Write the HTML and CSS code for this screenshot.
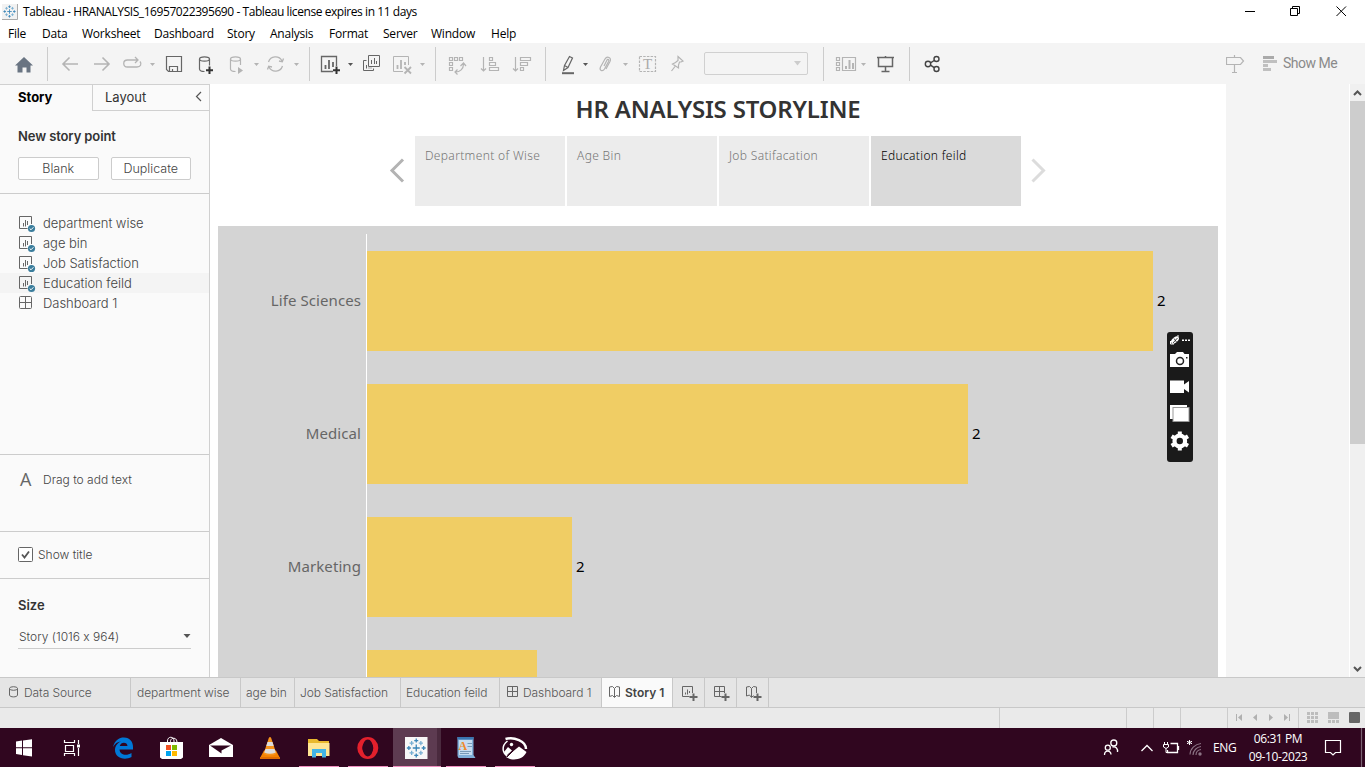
FILE: index.html
```html
<!DOCTYPE html>
<html lang="en">
<head>
<meta charset="utf-8">
<title>Tableau - HRANALYSIS_16957022395690</title>
<link rel="stylesheet" href="styles.css">
</head>
<body>
<svg class="defs" width="0" height="0">
  <defs>
    <symbol id="tableau" viewBox="-10 -10 20 20">
      <g stroke="#3b86b8" stroke-width="1.3" fill="none">
        <path d="M0-3.5V3.5M-3.5 0H3.5"/>
        <path d="M0-9.4V-5.4M-2-7.4H2M0 5.4V9.4M-2 7.4H2M-9.4 0H-5.4M-7.4-2V2M9.4 0H5.4M7.4-2V2"/>
        <path stroke="#77aed2" d="M-4.6-7V-2.8M-6.7-4.9H-2.5M4.6-7V-2.8M6.7-4.9H2.5M-4.6 7V2.8M-6.7 4.9H-2.5M4.6 7V2.8M6.7 4.9H2.5"/>
      </g>
    </symbol>
    <symbol id="sheet" viewBox="0 0 17 17">
      <path d="M8.5 12.5H.5V.5H12.500V8" fill="none" stroke="#666"/>
      <path d="M4.500 7V10.500M6.500 4V10.500M8.500 5V9" stroke="#666" fill="none"/>
      <circle cx="12.500" cy="12.500" r="3.600" fill="#3a7d9c"/>
      <path d="M10.700 12.500L12 13.800L14.400 11.300" stroke="#fff" fill="none"/>
    </symbol>
    <symbol id="grid" viewBox="0 0 13 13">
      <rect x=".5" y=".5" width="12" height="12" rx="1" fill="none" stroke="#666"/>
      <path d="M6.500 0V13M0 6.500H13" stroke="#666"/>
    </symbol>
  </defs>
</svg>
<div class="window">
  <header class="titlebar">
    <svg class="applogo" width="16" height="16"><rect width="16" height="16" fill="#f2f2f2"/><path d="M0 15.500H15.500V0" fill="none" stroke="#aaa"/><use href="#tableau" x="1" y="1" width="13" height="13"/></svg>
    <span class="apptitle">Tableau - HRANALYSIS_16957022395690 - Tableau license expires in 11 days</span>
    <svg class="winbtns" width="120" height="22" viewBox="1235 0 120 22" fill="none" stroke="#000">
      <path d="M1245 10.500H1255M1290.500 7.500H1297.500V14.500H1290.500ZM1292.500 7.500V5.500H1299.500V12.500H1297.500M1336.500 5.500L1346 15M1346 5.500L1336.500 15"/>
    </svg>
  </header>
  <nav class="menubar">
    <span class="m1">File</span><span class="m2">Data</span><span class="m3">Worksheet</span><span class="m4">Dashboard</span><span class="m5">Story</span><span class="m6">Analysis</span><span class="m7">Format</span><span class="m8">Server</span><span class="m9">Window</span><span>Help</span>
  </nav>
  <div class="toolbar">
    <svg width="48" height="41" viewBox="0 43 48 41">
      <path d="M24 57L33 65.500H30.500V72.500H26.500V67.500H22.500V72.500H17.500V65.500H15Z" fill="#697482"/>
      <path d="M47.500 47V81" stroke="#ccc"/>
    </svg>
    <svg width="262" height="41" viewBox="48 43 262 41" fill="none" stroke="#b4b4b4">
      <path stroke-width="1.600" d="M78 64H63M69.500 57.500L63 64L69.500 70.500M94 64H109M102.500 57.500L109 64L102.500 70.500"/>
      <path d="M134 67H127.500C122.500 67 122.500 60 127.500 60H138M135 57L138 60L135 63M134 67H137C140.500 67 142 64 140 61.500" stroke-width="1.300"/>
      <path d="M150 63H155L152.500 66ZM254 63H259L256.500 66ZM294 63H299L296.500 66Z" fill="#b4b4b4" stroke="none"/>
      <path stroke="#666" stroke-width="1.200" d="M166.500 56.500H181.500V71.500H168.500L166.500 69.500ZM169.500 71V66.500H177.500V71M172.500 71V69"/>
      <g stroke="#666" stroke-width="1.200"><ellipse cx="204.500" cy="59" rx="5" ry="2.200"/><path d="M199.500 59V69C199.500 70.500 202 71.500 204.500 71.500M209.500 59V65.500"/><path stroke="#333" stroke-width="2" d="M209.500 66.500V74M206 70.300H213"/></g>
      <g stroke-width="1.200"><ellipse cx="235.500" cy="59" rx="5" ry="2.200"/><path d="M230.500 59V69C230.500 70.500 233 71.500 235.500 71.500M240.500 59V65"/><path d="M238 67L243 70.500L238 74Z" fill="#b4b4b4" stroke="none"/></g>
      <path stroke-width="1.300" d="M268.500 62A7.300 7.300 0 0 1 282 61M282.500 66A7.300 7.300 0 0 1 269 67M283.500 58.500L282.300 61.800L279 61M267.500 69.500L268.700 66.200L272 67"/>
      <path d="M309.500 47V81" stroke="#ccc"/>
    </svg>
    <svg width="126" height="41" viewBox="310 43 126 41" fill="none" stroke="#666">
      <path stroke-width="1.300" d="M333 71.500H321.500V56.500H336.500V66"/><path stroke-width="1.800" d="M325.500 69V65M329 69V60M333 67V62"/><path stroke="#333" stroke-width="2" d="M336.500 66.500V74M333 70.300H340"/>
      <path d="M348 63H353L350.500 66Z" fill="#555" stroke="none"/>
      <path d="M368.500 55.500H379.500V66.500H368.500ZM371.500 64V60M374.500 64V58M376.500 64V61M366.500 60.500H363.500V70.500H373.500V68.500M366.500 68.500V65M369 68.500V67.500M371 68.500V67.500"/>
      <g stroke="#b4b4b4"><path d="M403 71.500H393.500V56.500H408.500V65"/><path stroke-width="1.800" d="M397.500 69V65M401 69V60M405 65V62M404.500 67L411 73.500M411 67L404.500 73.500"/></g>
      <path d="M420 63H425L422.500 66Z" fill="#b4b4b4" stroke="none"/>
      <path d="M435.500 47V81" stroke="#ccc"/>
    </svg>
    <svg width="110" height="41" viewBox="436 43 110 41" fill="none" stroke="#b4b4b4" stroke-width="1.200">
      <path d="M449.500 57.500H452.500V60.500H449.500ZM454.500 57.500H457.500V60.500H454.500ZM459.500 57.500H462.500V60.500H459.500ZM449.500 62.500H452.500V65.500H449.500ZM449.500 67.500H452.500V70.500H449.500ZM455.500 72C460 72 463.500 69 463.500 64M460.500 66L463.500 63L466 66M457.500 69.500L455 72L457.500 74.500"/>
      <path d="M483.500 57V71M481 68.500L483.500 71L486 68.500M489.500 57.500H492.500V60.500H489.500ZM489.500 62.500H495.500V65.500H489.500ZM489.500 67.500H498.500V70.500H489.500Z"/>
      <path d="M515.500 57V71M513 68.500L515.500 71L518 68.500M520.500 57.500H530.500V60.500H520.500ZM520.500 62.500H527.500V65.500H520.500ZM520.500 67.500H523.500V70.500H520.500Z"/>
      <path d="M545.500 47V81" stroke="#ccc" stroke-width="1"/>
    </svg>
    <svg width="157" height="41" viewBox="546 43 157 41" fill="none" stroke="#b4b4b4" stroke-width="1.200">
      <path stroke="#666" d="M569.500 56.500L572.500 58L568 67.500L563.500 70.500L564.500 65.500ZM564.500 65.500L568 67.500"/><path stroke="#666" stroke-width="2" d="M562 73.200H574"/>
      <path d="M583 63H588L585.500 66Z" fill="#555" stroke="none"/>
      <path d="M604 66L607 60C608 58.500 609.500 59.500 608.500 61.500L604.500 69C602.500 72 599 70.500 600.500 67L605 59C607 55.500 612 57.500 610 61.500L606 69"/>
      <path d="M623 63H628L625.500 66Z" fill="#b4b4b4" stroke="none"/>
      <rect x="639.500" y="56.500" width="16" height="15" stroke-dasharray="2.500 1.200"/>
      <text x="647.500" y="69" text-anchor="middle" class="ticon">T</text>
      <path d="M678 56.500L683 61L681 62L679.500 62L678.500 65L678.500 68L672.500 64L675.500 62.500L678 60.500ZM675 66.500L671.500 71"/>
    </svg>
    <div class="combo"><svg width="8" height="5"><path d="M0 0H7L3.500 4.500Z" fill="#ccc"/></svg></div>
    <svg width="102" height="41" viewBox="808 43 102 41" fill="none" stroke="#b4b4b4" stroke-width="1.200">
      <path d="M823.500 47V81M909.500 47V81" stroke="#ccc" stroke-width="1"/>
      <path d="M836.500 57.500H839.500V60.500H836.500ZM836.500 62.500H839.500V65.500H836.500ZM836.500 67.500H839.500V70.500H836.500ZM842.500 57.500H855.500V70.500H842.500Z"/><path stroke-width="2" d="M846 69V66M849.500 69V60M853 69V63"/>
      <path d="M861 63H866L863.500 66Z" fill="#b4b4b4" stroke="none"/>
      <path stroke="#666" stroke-width="1.500" d="M877 57.500H894M878.500 57.500V66.500H892.500V57.500M885.500 56V57M885.500 67V71.500M881.500 71.500H889.500"/>
    </svg>
    <svg width="50" height="41" viewBox="910 43 50 41" fill="none" stroke="#444" stroke-width="1.400">
      <circle cx="928" cy="64" r="2.700"/><circle cx="936.500" cy="59" r="2.500"/><circle cx="936.500" cy="69" r="2.500"/><path d="M930.500 62.800L934.200 60.500M930.500 65.200L934.200 67.700"/>
    </svg>
    <div class="showme">
      <svg width="52" height="41" viewBox="1226 43 52 41"><path d="M1226.500 57.500H1240.500L1243.500 61L1240.500 64.500H1226.500ZM1234.500 55V57M1234.500 65V72.500M1232 72.500H1237" fill="none" stroke="#b4b4b4" stroke-width="1.200"/><path fill="#aaa" d="M1263 56H1274V59H1263Z"/><path fill="#c0c0c0" d="M1263 60H1277V63H1263ZM1263 64H1268V67H1263ZM1263 68H1271V71H1263Z"/></svg>
      <span>Show Me</span>
    </div>
  </div>
  <main class="main">
    <aside class="side">
      <div class="tabs"><b>Story</b><div class="layout"><span>Layout</span><svg width="7" height="11"><path d="M6 1L1.500 5.500L6 10" fill="none" stroke="#555" stroke-width="1.200"/></svg></div></div>
      <section class="newpoint"><b>New story point</b><div class="buttons"><button>Blank</button><button>Duplicate</button></div></section>
      <section class="sheets">
        <div class="row"><svg width="17" height="17"><use href="#sheet"/></svg><span>department wise</span></div>
        <div class="row"><svg width="17" height="17"><use href="#sheet"/></svg><span>age bin</span></div>
        <div class="row"><svg width="17" height="17"><use href="#sheet"/></svg><span>Job Satisfaction</span></div>
        <div class="row on"><svg width="17" height="17"><use href="#sheet"/></svg><span>Education feild</span></div>
        <div class="row dash"><svg width="13" height="13"><use href="#grid"/></svg><span>Dashboard 1</span></div>
      </section>
      <section class="drag"><span class="abig">A</span><span class="dragtext">Drag to add text</span></section>
      <section class="show"><svg width="15" height="15"><rect x=".5" y=".5" width="14" height="14" rx="1" fill="#fff" stroke="#666"/><path d="M4 7.500L6.500 10.500L11 4.500" fill="none" stroke="#555" stroke-width="1.800"/></svg><span>Show title</span></section>
      <section class="size"><b>Size</b><div class="select"><span>Story (1016 x 964)</span><svg width="8" height="5"><path d="M.5 0H7.500L4 4Z" fill="#555"/></svg></div></section>
    </aside>
    <div class="canvas">
      <h1>HR ANALYSIS STORYLINE</h1>
      <div class="nav">
        <svg width="16" height="26"><path d="M14 1.500L3 12.500L14 23.500" fill="none" stroke="#b3b3b3" stroke-width="3"/></svg>
        <div class="points"><div><span>Department of Wise</span></div><div><span>Age Bin</span></div><div><span>Job Satifacation</span></div><div class="sel"><span>Education feild</span></div></div>
        <svg width="16" height="26"><path d="M1.500 1.500L12.500 12.500L1.500 23.500" fill="none" stroke="#dcdcdc" stroke-width="3"/></svg>
      </div>
      <div class="chart">
        <div class="bar-row"><label>Life Sciences</label><div class="plot"><i style="width:786px"></i><em>2</em></div></div>
        <div class="bar-row"><label>Medical</label><div class="plot"><i style="width:601px"></i><em>2</em></div></div>
        <div class="bar-row"><label>Marketing</label><div class="plot"><i style="width:205px"></i><em>2</em></div></div>
        <div class="bar-row"><label></label><div class="plot"><i style="width:170px"></i></div></div>
      </div>
    </div>
    <div class="scroll"><svg width="15" height="17"><path d="M4 11L7.500 7.500L11 11" fill="none" stroke="#555" stroke-width="2"/></svg><div class="thumb"></div><svg width="15" height="17"><path d="M4 7L7.500 10.500L11 7" fill="none" stroke="#555" stroke-width="2"/></svg></div>
  </main>
  <footer class="sheettabs">
    <div class="t1"><svg width="9" height="12" fill="none" stroke="#666"><ellipse cx="4.500" cy="2.500" rx="4" ry="1.800"/><path d="M.5 2.500V9C.5 11.500 8.500 11.500 8.500 9V2.500"/></svg><span>Data Source</span></div>
    <div class="t2"><span>department wise</span></div><div class="t3"><span>age bin</span></div><div class="t4"><span>Job Satisfaction</span></div><div class="t5"><span>Education feild</span></div>
    <div class="t6"><svg width="11" height="11" fill="none" stroke="#666"><path d="M.5 .5H10.500V10.500H.5ZM5.500 .5V10.500M.5 5.500H10.500"/></svg><span>Dashboard 1</span></div>
    <div class="t7"><svg width="11" height="12" fill="none" stroke="#666"><path d="M.5 1V10.500L3.500 9.500L5.500 11.500L7.500 9.500L10.500 10.500V1L7.500 .5L5.500 2.500L3.500 .5ZM5.500 2.500V11"/></svg><b>Story 1</b></div>
    <div class="add"><svg width="16" height="16" fill="none" stroke="#666"><path d="M7.500 10.500H.5V.5H10.500V7M3.500 8.500V6.500M5.500 8.500V3.500M7.500 7V5"/><path stroke-width="2" d="M11.500 7.500V15M7.500 11H15.500"/></svg></div>
    <div class="add"><svg width="16" height="16" fill="none" stroke="#666"><path d="M7.500 10.500H.5V.5H10.500V7M5.500 .5V10.500M.5 5.500H10.500"/><path stroke-width="2" d="M11.500 7.500V15M7.500 11H15.500"/></svg></div>
    <div class="add"><svg width="16" height="16" fill="none" stroke="#666"><path d="M5.500 11V2.500L3.500 .5L.5 1V10L3.500 9L5.500 11.500L7.500 9.500M5.500 2.500L7.500 .5L10.500 1V7"/><path stroke-width="2" d="M11.500 7.500V15M7.500 11H15.500"/></svg></div>
  </footer>
  <div class="status">
    <svg width="366" height="20" viewBox="999 708 366 20">
      <path d="M999.500 708V728M1126.500 708V728M1153.500 708V728M1180.500 708V728M1227.500 708V728M1298.500 708V728" stroke="#ccc"/>
      <path d="M1236 714H1237V721H1236ZM1242 714V721L1238 717.500ZM1257 714V721L1253 717.500ZM1269 714V721L1273 717.500ZM1284 714V721L1288 717.500ZM1289 714H1290V721H1289Z" fill="#b0b0b0"/>
      <path d="M1307 712H1310V715H1307ZM1311 712H1314V715H1311ZM1315 712H1318V715H1315ZM1307 716H1310V719H1307ZM1311 716H1314V719H1311ZM1315 716H1318V719H1315ZM1307 720H1310V723H1307ZM1311 720H1314V723H1311ZM1315 720H1318V723H1315ZM1328 712H1339V719H1328ZM1328 720H1331V723H1328ZM1332 720H1335V723H1332ZM1336 720H1339V723H1336Z" fill="#bdbdbd"/>
      <rect x="1349" y="712" width="11" height="11" rx="1" fill="#666"/>
    </svg>
  </div>
  <div class="taskbar">
    <svg width="540" height="39" viewBox="0 728 540 39">
      <path fill="#fff" d="M16 741.500L22 740.600V747.300H16ZM23 740.500L32 739.200V747.300H23ZM16 748.300H22V755L16 754.100ZM23 748.300H32V756.500L23 755.200Z"/>
      <g fill="none" stroke="#fff" stroke-width="1.200"><path d="M64.500 740V742.500H74.500V740M65.500 745.500H73.500V751.500H65.500ZM64.500 756V753.500H74.500V756M78.500 740V744M78.500 748V756"/></g><path fill="#fff" d="M77 744.500H80V747.500H77Z"/>
      <path fill="#0078d7" d="M113 747C115 740 119 737.500 124 737.500C130 737.500 133 742 133 747V749.500H119.500C120 755.500 127 756 131.500 753V757C124 761 114.500 757.500 115 749.500C115.300 745.500 118 742.500 121 741.500C117.500 741.700 115 743.700 113 747ZM119.800 746H127.500C127.500 741.500 120.500 741.500 119.800 746Z"/>
      <path d="M167.500 744V741C167.500 736 174 736 174 741V744M170.500 744V741.500C170.500 737 177 737 177 742V744" fill="none" stroke="#fff"/><path fill="#fff" d="M160 742H183V757.500L181 759H162L160 757.500Z"/><path fill="#f25022" d="M166 745H171V750H166Z"/><path fill="#7fba00" d="M172 745H177V750H172Z"/><path fill="#00a4ef" d="M166 751H171V756H166Z"/><path fill="#ffb900" d="M172 751H177V756H172Z"/>
      <path fill="#fff" d="M209 745L221 738L233 745V757H209Z"/><path fill="#30061f" d="M210 745.500H231L221.500 750.500V753.500Z"/>
      <path fill="#f58200" d="M264 750.500H276L280 758H260Z"/><path fill="#e06c00" d="M260 757H280V759H260Z"/><path fill="#f7941d" d="M268.800 738Q270 736 271.200 738L276.500 754Q270 757 263.500 754Z"/><path fill="#ddd" d="M267.500 742H272.500L273.700 746H266.300ZM265.500 749H274.500L275.800 752.500Q270 755 264.200 752.500Z"/>
      <path fill="#e9b92e" d="M308 739H317L319 741H329V747H308Z"/><path fill="#ffe694" d="M308 743H329.500V756H308Z"/><path fill="#42b4e6" d="M312 749H326V757.500H322V753H316V757.500H312Z"/>
      <ellipse cx="367.800" cy="748" rx="8" ry="8.500" fill="none" stroke="#e3202c" stroke-width="5"/><ellipse cx="367.800" cy="748" rx="5.200" ry="8.500" fill="#30061f"/>
      <path fill="#5d3b51" d="M393 728H437V767H393Z"/><path fill="#4a2a3e" d="M437 728H441V767H437Z"/>
      <rect x="405" y="737" width="22.500" height="22" fill="#f7f7f7"/><use href="#tableau" x="406" y="738" width="20.500" height="20"/>
      <path fill="#7faed8" d="M457.500 737H473.500V755L475.500 758H458.500L457.500 756Z"/><path fill="#c5dcf0" d="M459 740H472V755H459Z"/><path fill="#3a75b0" d="M457.500 737H473.500V739.500H457.500Z"/><path stroke="#789ab8" d="M467.500 743.500H472M467.500 746.500H472M460 751.500H471M460 753.500H469"/><text x="458.500" y="750" class="doca">A</text>
      <g fill="none" stroke="#fff"><path stroke-width="2.500" d="M505.500 739C514 736.500 526 741 526 749"/><path stroke-width="1.500" d="M507.500 741C501 746 502.500 753 507 755.500"/></g><circle cx="511.500" cy="744.500" r="1.700" fill="#fff"/><path fill="#fff" d="M504 752L508 747L512 750.500L506 756ZM506 757L519 746.500L526.500 752C523 760.500 511 761 506 757Z"/><path d="M507 757L513 751" stroke="#30061f"/>
      <path fill="#f08fc0" d="M299 766H339V767H299ZM348 766H388V767H348ZM393 766H441V767H393ZM446 766H486V767H446ZM495 766H535V767H495Z"/>
    </svg>
    <div class="tray">
      <svg width="112" height="39" viewBox="1100 728 112 39" fill="none" stroke="#fff" stroke-width="1.300">
        <circle cx="1113.800" cy="743" r="3"/><circle cx="1107.800" cy="747.700" r="2.500"/><path d="M1104.500 755C1104.500 750 1111 750 1111 754.500M1112.500 747C1116 746 1118 749 1117.500 752"/>
        <path d="M1141.500 751L1147 745.500L1152.500 751M1170.500 743.500H1177.500V752.500H1167.500V750M1178.500 746V750"/><path stroke-width="1" d="M1164.500 742V744M1167.500 742V744M1163.500 744.500H1168.500V747Q1166 750 1163.500 747ZM1166 748.500V752.500H1168"/>
        <path stroke="#8c7485" stroke-width="1.100" d="M1190 754.500C1190 749 1195 744 1201 743.500M1193 755C1193 750.500 1197 747 1201 746.500M1196 755C1196 752 1198 750 1201 749.500"/><circle cx="1200" cy="754" r="1.700" fill="#8c7485" stroke="none"/>
        <path stroke-width="1" d="M1189.500 740V745M1187 741.300L1192 743.700M1192 741.300L1187 743.700"/>
      </svg>
      <span class="eng">ENG</span>
      <div class="clock"><span>06:31 PM</span><span>09-10-2023</span></div>
      <svg width="45" height="39" viewBox="1320 728 45 39" fill="none" stroke="#fff" stroke-width="1.200"><path d="M1325.500 740.500H1340.500V752.500H1335.500L1333 755L1330.500 752.500H1325.500Z"/><path d="M1361.500 728V767" stroke="#7a6272"/></svg>
    </div>
  </div>
  <svg class="recorder" width="26" height="130" viewBox="1167 332 26 130">
    <rect x="1167" y="332" width="26" height="130" rx="3" fill="#1a1a1a"/>
    <ellipse cx="1175" cy="340" rx="4.500" ry="2.700" transform="rotate(-40 1175 340)" fill="#fff"/><path d="M1170.500 341V344H1174M1177 336L1179 336" stroke="#fff" fill="none"/><path d="M1173 343L1177.500 338M1174 338.500L1176.500 342" stroke="#1a1a1a" stroke-width=".8" fill="none"/>
    <path d="M1182 339.500H1184V341H1182ZM1185 339.500H1187V341H1185ZM1188 339.500H1190V341H1188Z" fill="#fff"/>
    <path fill="#fff" d="M1170 354H1175L1177 352H1183L1184.500 354H1189V367H1170Z"/><circle cx="1180" cy="361" r="3.500" fill="#fff" stroke="#222" stroke-width="1.500"/><path fill="#222" d="M1186 357H1187.500V358.500H1186Z"/>
    <path fill="#fff" d="M1170 380.500H1184V384.500L1189 381V392.500L1184 389V393H1170Z"/>
    <path fill="#fff" d="M1170 405H1187V419H1170Z"/><rect x="1173" y="407.500" width="16" height="14" fill="#fff" stroke="#999"/>
    <circle cx="1179.800" cy="441" r="5.300" fill="none" stroke="#fff" stroke-width="4.200"/><path stroke="#fff" stroke-width="4" d="M1179.800 431.500V435M1179.800 447V450.500M1171.600 436.200L1174.500 438M1185 444L1188 445.800M1171.600 445.800L1174.500 444M1185 438L1188 436.200"/>
  </svg>
</div>
</body>
</html>
```
FILE: styles.css
```css
*{box-sizing:border-box}
body{margin:0;overflow:hidden;background:#fff;font-family:"Open Sans","Noto Sans",sans-serif;font-size:12px;color:#000}
.defs{position:absolute}
svg{display:block;flex:none}
span,b,h1,label{white-space:nowrap}
.window{position:relative;width:1365px;height:767px;display:flex;flex-direction:column}
.titlebar{height:22px;display:flex;align-items:center;padding:1px 10px 0 2px}
.apptitle{margin-left:5px;font-size:12px;letter-spacing:-.43px;flex:1}
.menubar{height:21px;display:flex;padding-left:8px;line-height:24px;letter-spacing:-.22px}
.menubar span{flex:none}
.m1{width:34px}.m2{width:40px}.m3{width:72px}.m4{width:73px}.m5{width:43px}.m6{width:59px}.m7{width:54px}.m8{width:48px}.m9{width:60px}
.toolbar{height:41px;background:#f4f4f4;display:flex;flex:none;align-items:center}
.ticon{font:15px "Liberation Serif",serif;fill:#aaa;stroke:none}
.doca{font:bold 12px "Liberation Serif",serif;fill:#f0882c}
.combo{width:104px;height:23px;margin-left:1px;border:1px solid #d0d0d0;border-radius:2px;display:flex;align-items:center;justify-content:flex-end;padding-right:5px}
.showme{margin-left:auto;width:139px;display:flex;align-items:center;color:#8a8a8a;font:14px Roboto,sans-serif;letter-spacing:-.5px}
.showme span{margin-left:5px;padding-bottom:1px}
.main{height:593px;display:flex;background:#f4f4f4;flex:none}
.side{width:210px;flex:none;background:#fafafa;border-top:1px solid #d0d0d0;border-right:1px solid #d0d0d0;font-family:Inter,sans-serif;font-feature-settings:"calt" 0;color:#444}
.side section{border-bottom:1px solid #ccc}
.tabs{height:26px;display:flex;font-size:13px;color:#333}
.tabs>b{width:92px;padding:4px 0 0 18px;color:#000}
.layout{flex:1;border-left:1px solid #d0d0d0;border-bottom:1px solid #d0d0d0;display:flex;align-items:center;justify-content:space-between;padding:0 7px 2px 12px}
.newpoint{height:83px;padding:16px 18px 0}
.newpoint b{display:block;font-size:13px;font-weight:600;line-height:18px;color:#333;letter-spacing:-.1px}
.buttons{display:flex;gap:12px;margin-top:12px}
.buttons button{width:81px;height:23px;border:1px solid #ccc;border-radius:2px;background:#fff;padding:0;font:300 12.500px Inter,sans-serif;color:#444}
.sheets{height:261px;padding-top:19px;font-size:13px;font-weight:300}
.row{height:20px;display:flex;padding:3px 0 0 19px;line-height:14px}
.row span{margin-left:7px;letter-spacing:-.04px}
.row.on{background:#f4f4f4}
.row.dash span{margin-left:11px}
.drag{height:77px;display:flex;padding:14px 0 0 20px;font-size:12px;font-weight:300}
.abig{font:18px/20px "Open Sans",sans-serif;color:#666;width:23px}
.dragtext{line-height:22px}
.show{height:47px;display:flex;align-items:center;padding:0 0 1px 18px;font-size:12px;font-weight:300}
.show span{margin-left:5px}
.side .size{height:98px;border:0;padding:17px 18px 0}
.size b{display:block;font-size:13px;font-weight:600;line-height:18px;color:#333}
.select{margin-top:12px;height:23px;border-bottom:1px solid #ccc;display:flex;align-items:center;justify-content:space-between;padding:0 0 1px 1px;font-size:12px;font-weight:300}
.canvas{width:1016px;height:593px;background:#fff;padding:0 8px;overflow:hidden;flex:none}
h1{margin:0;height:52px;text-align:center;font:600 24px/50px "Noto Sans",sans-serif;color:#333;letter-spacing:-.2px}
.nav{height:70px;display:flex;align-items:center;margin-left:171px;gap:10px}
.points{display:flex;gap:2px}
.points div{width:150px;height:70px;background:#ececec;padding:11px 10px;color:#757575;font:300 12px/17px "Noto Sans",sans-serif;letter-spacing:.34px}
.points .sel{background:#dadada;color:#000}
.chart{margin-top:20px;height:560px;background:#d4d4d4;padding-top:8px}
.bar-row{height:133px;display:flex}
.bar-row label{width:148px;text-align:right;padding-right:5px;line-height:133px;font-family:"Noto Sans",sans-serif;font-size:15px;letter-spacing:.08px;color:#666}
.plot{border-left:1px solid #fff;display:flex;align-items:center}
.plot i{height:100px;background:#f0cd64}
.plot em{font:15px "Noto Sans",sans-serif;margin-left:4px;padding-bottom:1px}
.scroll{width:16px;margin-left:auto;border-left:1px solid #fff;background:#f0f0f0;display:flex;flex-direction:column}
.thumb{height:343px;background:#cdcdcd;margin-bottom:auto}
.sheettabs{height:31px;background:#e5e5e5;border-top:1px solid #c8c8c8;border-bottom:1px solid #c8c8c8;display:flex;font:300 12px Inter,sans-serif;color:#555;flex:none}
.sheettabs>div{border-right:1px solid #c8c8c8;display:flex;align-items:center;padding-left:6px;gap:5px;flex:none}
.sheettabs span{letter-spacing:-.06px}
.sheettabs .t1{width:131px;padding-left:9px;gap:6px}.t2{width:110px}.sheettabs .t3{width:54px;padding-left:5px}.sheettabs .t4{width:106px;padding-left:5px}.sheettabs .t5{width:99px;padding-left:5px}.t6{width:102px}.t7{width:71px;background:#fafafa}
.sheettabs .t6,.sheettabs .t7{padding-left:7px}
.sheettabs .add{width:32px;padding:3px 0 0 9px}
.t7 b{font-weight:600;color:#444;padding-bottom:1px}
.t1 svg,.t6 svg,.t7 svg{margin-bottom:2px}
.status{height:20px;background:#eaeaea;display:flex;justify-content:flex-end;flex:none}
.taskbar{height:39px;background:#30061f;display:flex;justify-content:space-between;flex:none;color:#fff}
.tray{display:flex;width:265px}
.eng{width:34px;padding-left:1px;line-height:39px;letter-spacing:-.3px}
.clock{width:74px;display:flex;flex-direction:column;align-items:center;padding:2px 10px 0 0;line-height:18px;letter-spacing:-.4px}
.recorder{position:absolute;left:1167px;top:332px}
```
